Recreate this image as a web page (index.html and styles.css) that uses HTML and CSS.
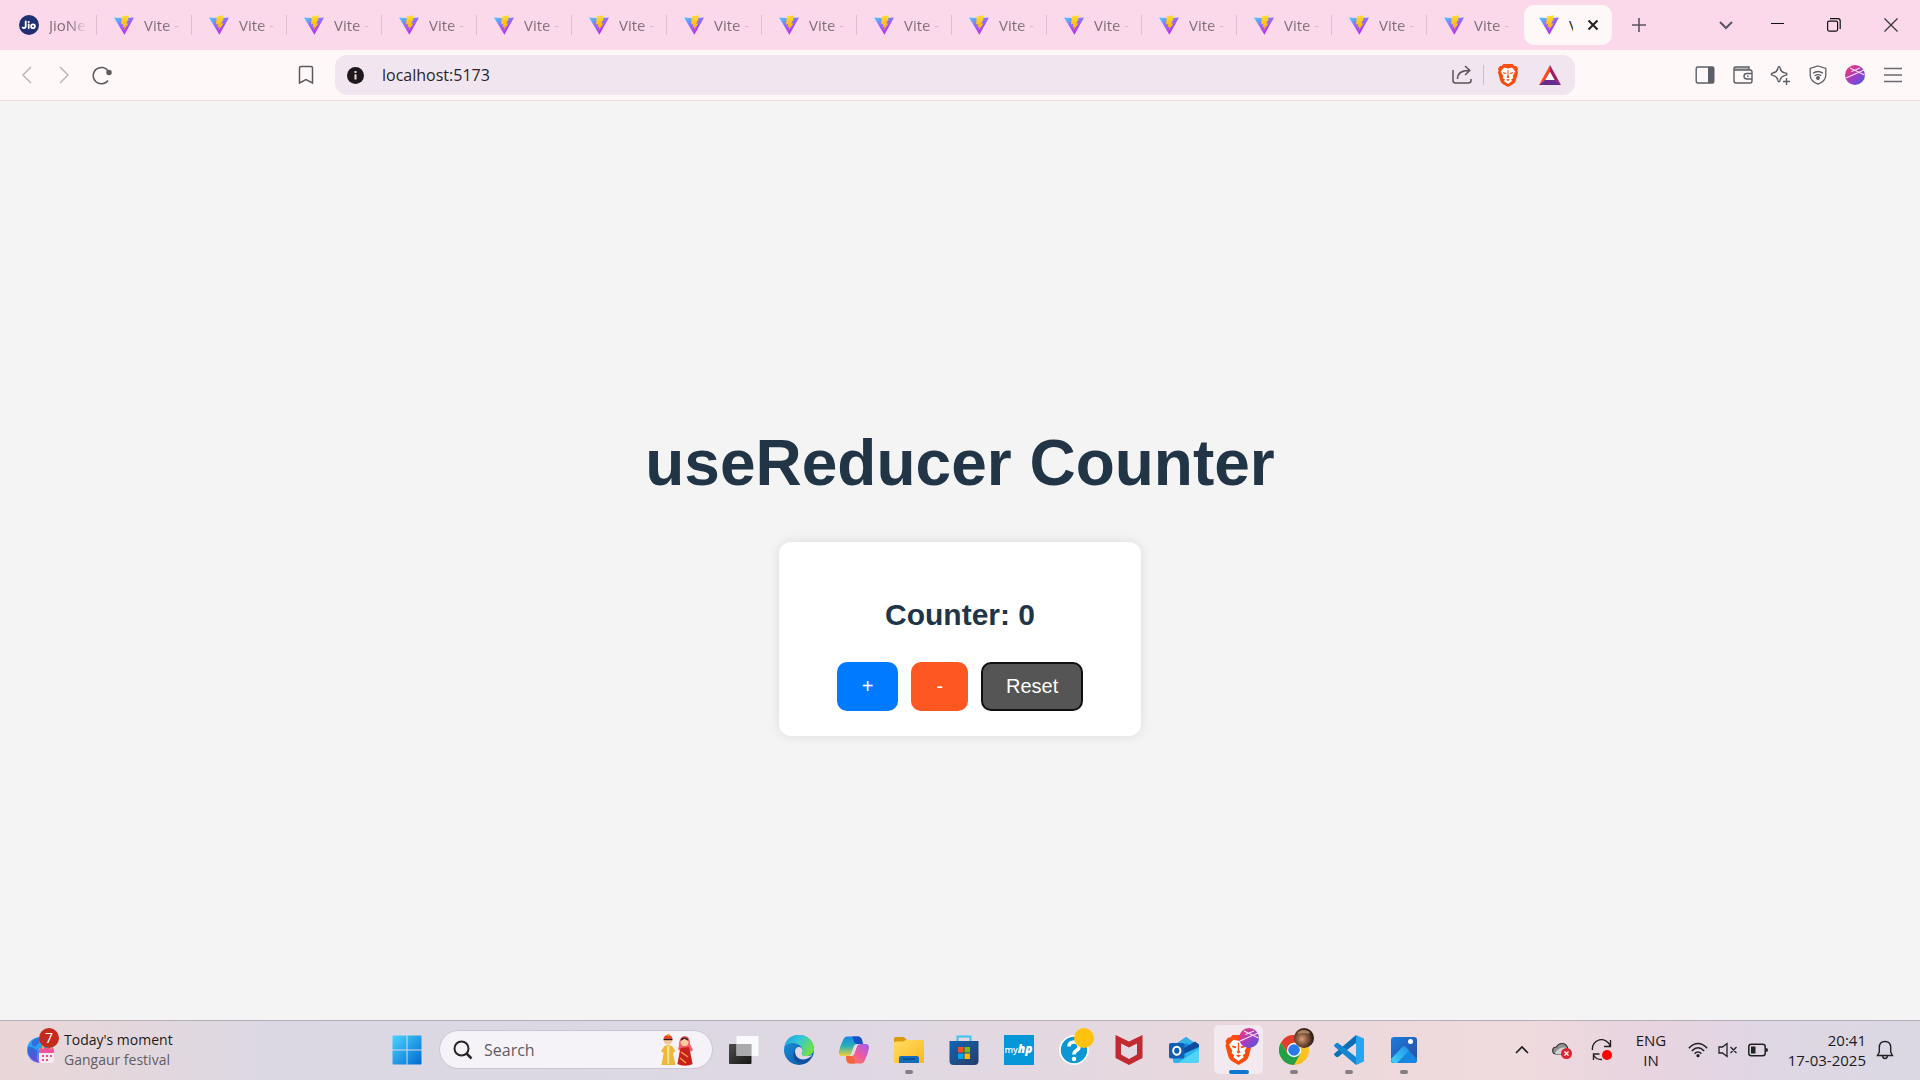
FILE: index.html
```html
<!DOCTYPE html>
<html lang="en">
<head>
<meta charset="utf-8">
<title>Vite + React</title>
<link rel="stylesheet" href="styles.css">
</head>
<body>
<svg class="sprite" aria-hidden="true">
  <defs>
    <linearGradient id="viteBody" x1="0" y1="0" x2=".6" y2="1"><stop offset="0" stop-color="#41d1ff"/><stop offset=".5" stop-color="#9066ff"/><stop offset="1" stop-color="#c125ff"/></linearGradient>
    <linearGradient id="viteBolt" x1="0" y1="0" x2="0" y2="1"><stop offset="0" stop-color="#ffdd35"/><stop offset="1" stop-color="#ffa800"/></linearGradient>
    <linearGradient id="orb" x1="0" y1="0" x2="1" y2="1"><stop offset="0" stop-color="#ff3a63"/><stop offset=".5" stop-color="#a83cc0"/><stop offset="1" stop-color="#3d5be8"/></linearGradient>
    <linearGradient id="win" x1="0" y1="0" x2="1" y2="1"><stop offset="0" stop-color="#4cd4ff"/><stop offset="1" stop-color="#0069cf"/></linearGradient>
    <linearGradient id="edgeTop" x1="0" y1="0" x2="1" y2=".5"><stop offset="0" stop-color="#1a9ee0"/><stop offset=".5" stop-color="#35c6d6"/><stop offset="1" stop-color="#6fe04c"/></linearGradient>
    <linearGradient id="edgeLow" x1="0" y1="0" x2="1" y2="1"><stop offset="0" stop-color="#1d94dc"/><stop offset="1" stop-color="#0a4fa0"/></linearGradient>
    <linearGradient id="coA" x1="0" y1="0" x2="0" y2="1"><stop offset="0" stop-color="#1688e8"/><stop offset=".5" stop-color="#2bb1b4"/><stop offset="1" stop-color="#f2d03a"/></linearGradient>
    <linearGradient id="coB" x1="1" y1="0" x2="0" y2="1"><stop offset="0" stop-color="#a05af0"/><stop offset=".5" stop-color="#ee5c9c"/><stop offset="1" stop-color="#ff8a3c"/></linearGradient>
    <linearGradient id="folder" x1="0" y1="0" x2="1" y2="1"><stop offset="0" stop-color="#ffdc63"/><stop offset="1" stop-color="#fbb91c"/></linearGradient>
    <linearGradient id="store" x1="0" y1="0" x2="1" y2="1"><stop offset="0" stop-color="#0f67b5"/><stop offset="1" stop-color="#283a66"/></linearGradient>
    <linearGradient id="photo" x1="0" y1="0" x2="1" y2="1"><stop offset="0" stop-color="#1a7be0"/><stop offset="1" stop-color="#2b4c9c"/></linearGradient>
    <linearGradient id="hill" x1="0" y1="1" x2="1" y2="0"><stop offset="0" stop-color="#45d2f5"/><stop offset="1" stop-color="#1e93e8"/></linearGradient>
    <linearGradient id="globe" x1="0" y1="0" x2=".4" y2="1"><stop offset="0" stop-color="#1fa9fb"/><stop offset=".6" stop-color="#2f9bf5"/><stop offset="1" stop-color="#8a6cf0"/></linearGradient>
    <linearGradient id="land" x1="0" y1="0" x2="0" y2="1"><stop offset="0" stop-color="#2a6fdc"/><stop offset="1" stop-color="#6a48e0"/></linearGradient>
    <linearGradient id="dark" x1="0" y1="0" x2="1" y2="1"><stop offset="0" stop-color="#4d4d4b"/><stop offset="1" stop-color="#161616"/></linearGradient>
    <radialGradient id="face" cx=".4" cy=".55" r=".6"><stop offset="0" stop-color="#d7a077"/><stop offset=".5" stop-color="#7d5138"/><stop offset="1" stop-color="#21130e"/></radialGradient>
    <symbol id="vite" viewBox="0 0 20 20"><path d="M0 2.400 10 3.200 20 2.400 10.400 19.700Z" fill="url(#viteBody)"/><path d="M15 .2 7.800 1.400 7 9.600 9.300 9.100 8.500 12.400 10.600 11.700 9.500 15.800 14.600 8.300 12.300 8.700 13.600 5.400 15.600 4.900 13.900 4.500Z" fill="url(#viteBolt)"/></symbol>
    <symbol id="lion" viewBox="0 0 20 23"><path d="M5.500 0H14.500L16.300 2 18 1.900 20 4.600 19.400 6.400 20 8.200 17.800 16.500Q17.200 18.700 15.300 19.900L10 23 4.700 19.900Q2.800 18.700 2.200 16.500L0 8.200.6 6.400 0 4.600 2 1.900 3.700 2Z" fill="#fb4c10"/><path d="M10 4.400 14 3.600 17.200 7.400 16 9.800 14.700 12 15.300 14 13.200 15.600 14 17 10 20 6 17 6.800 15.600 4.700 14 5.300 12 4 9.800 2.800 7.400 6 3.600Z" fill="#fff"/><path d="M4.800 8 8.400 8.900 8 10.100 5.500 9.500ZM15.200 8 11.600 8.900 12 10.100 14.500 9.500ZM9.500 6H10.500V11.500L11.400 13.300 10 14.200 8.600 13.300 9.500 11.500ZM8 15.700 10 15 12 15.700 10 17Z" fill="#fb4c10"/></symbol>
    <symbol id="orbIcon" viewBox="0 0 20 20"><circle cx="10" cy="10" r="10" fill="url(#orb)"/><path d="M1 13 19 5M5 3 19.500 10M6.500 6.500 15 3" stroke="#fbdcf2" stroke-width="1.200" fill="none"/></symbol>
  </defs>
</svg>

<header class="browser">
  <div class="tabstrip">
    <nav class="tabs" aria-label="Tabs">
      <button class="tab first"><svg class="fav" viewBox="0 0 20 20"><circle cx="10" cy="10" r="10" fill="#213170"/><g fill="none" stroke="#fff" stroke-width="1.800" stroke-linecap="round"><path d="M6.700 6.500V11.200Q6.700 13 4.900 13L3.700 12.600M9.700 9.500V13"/><circle cx="14" cy="11.200" r="1.900"/></g><circle cx="9.700" cy="7" r="1.100" fill="#fff"/></svg><span>JioNe</span></button>
      <button class="tab"><svg class="fav"><use href="#vite"/></svg><span>Vite -</span></button>
      <button class="tab"><svg class="fav"><use href="#vite"/></svg><span>Vite -</span></button>
      <button class="tab"><svg class="fav"><use href="#vite"/></svg><span>Vite -</span></button>
      <button class="tab"><svg class="fav"><use href="#vite"/></svg><span>Vite -</span></button>
      <button class="tab"><svg class="fav"><use href="#vite"/></svg><span>Vite -</span></button>
      <button class="tab"><svg class="fav"><use href="#vite"/></svg><span>Vite -</span></button>
      <button class="tab"><svg class="fav"><use href="#vite"/></svg><span>Vite -</span></button>
      <button class="tab"><svg class="fav"><use href="#vite"/></svg><span>Vite -</span></button>
      <button class="tab"><svg class="fav"><use href="#vite"/></svg><span>Vite -</span></button>
      <button class="tab"><svg class="fav"><use href="#vite"/></svg><span>Vite -</span></button>
      <button class="tab"><svg class="fav"><use href="#vite"/></svg><span>Vite -</span></button>
      <button class="tab"><svg class="fav"><use href="#vite"/></svg><span>Vite -</span></button>
      <button class="tab"><svg class="fav"><use href="#vite"/></svg><span>Vite -</span></button>
      <button class="tab"><svg class="fav"><use href="#vite"/></svg><span>Vite -</span></button>
      <button class="tab last"><svg class="fav"><use href="#vite"/></svg><span>Vite -</span></button>
      <div class="tab-active"><svg class="fav"><use href="#vite"/></svg><span>V</span><button class="icon-btn" aria-label="Close tab"><svg width="12" height="12" viewBox="0 0 12 12" stroke="#222" stroke-width="2" fill="none"><path d="M1.500 1.500 10.500 10.500M10.500 1.500 1.500 10.500"/></svg></button></div>
      <button class="icon-btn new-tab" aria-label="New tab"><svg width="14" height="14" viewBox="0 0 14 14" stroke="#5c5560" stroke-width="1.600"><path d="M7 0V14M0 7H14"/></svg></button>
    </nav>
    <div class="window-controls">
      <button class="icon-btn" aria-label="Search tabs"><svg width="14" height="14" viewBox="0 0 14 14" fill="none" stroke="#5c5560" stroke-width="2"><path d="M1 4 7 10 13 4"/></svg></button>
      <button class="icon-btn" aria-label="Minimise"><svg width="14" height="14" viewBox="0 0 14 14"><path d="M0 5H13V6H0Z" fill="#111"/></svg></button>
      <button class="icon-btn" aria-label="Restore"><svg width="14" height="14" viewBox="0 0 14 14" fill="none" stroke="#111" stroke-width="1.200"><rect x=".6" y="3.100" width="10" height="10" rx="1.500"/><path d="M3 .7H11Q13.200.700 13.200 3V11"/></svg></button>
      <button class="icon-btn" aria-label="Close"><svg width="14" height="14" viewBox="0 0 14 14" stroke="#333" stroke-width="1.200"><path d="M.5.500 13.500 13.500M13.500.500.500 13.500"/></svg></button>
    </div>
  </div>

  <div class="toolbar">
    <div class="nav-buttons">
      <button class="icon-btn" aria-label="Back"><svg width="18" height="18" viewBox="0 0 18 18" fill="none" stroke="#bcb6ba" stroke-width="1.500"><path d="M13 1 5 9 13 17"/></svg></button>
      <button class="icon-btn" aria-label="Forward"><svg width="18" height="18" viewBox="0 0 18 18" fill="none" stroke="#bcb6ba" stroke-width="1.500"><path d="M5 1 13 9 5 17"/></svg></button>
      <button class="icon-btn" aria-label="Reload"><svg width="20" height="20" viewBox="0 0 20 20" fill="none" stroke="#5c5a60" stroke-width="1.500"><path d="M16.500 6.500A8.200 8.200 0 1 0 16 15.500"/><circle cx="17" cy="7.600" r="2" fill="#5c5a60"/></svg></button>
    </div>
    <button class="icon-btn bookmark" aria-label="Bookmark"><svg width="16" height="20" viewBox="0 0 16 20" fill="none" stroke="#5c5a60" stroke-width="1.500"><path d="M1.500 18V3Q1.500 1.500 3 1.500H13Q14.500 1.500 14.500 3V18L8 14.500Z"/></svg></button>
    <div class="address">
      <svg width="17" height="17" viewBox="0 0 17 17"><circle cx="8.500" cy="8.500" r="8.500" fill="#1c181b"/><path d="M7.500 7.200H9.500V12.500H7.500ZM7.500 4H9.500V6H7.500Z" fill="#e8dde6"/></svg>
      <input type="text" aria-label="Address" value="localhost:5173">
      <button class="icon-btn share" aria-label="Share"><svg width="20" height="20" viewBox="0 0 20 20" fill="none" stroke="#5a5159" stroke-width="1.500"><path d="M1 5V15.500Q1 18 3.500 18H16.500Q19 18 19 15.500V14"/><path d="M5.500 14Q5.500 5.500 17 5.500M13 1 17.800 5.500 13 10"/></svg></button>
      <button class="icon-btn shield" aria-label="Brave Shields"><svg width="20" height="23"><use href="#lion"/></svg></button>
      <button class="icon-btn rewards" aria-label="Brave Rewards"><svg width="22" height="20" viewBox="0 0 22 20"><path d="M11 0V7L6.500 15 0 20Z" fill="#ff4724"/><path d="M11 0 22 20 15.500 15 11 7Z" fill="#9e1f63"/><path d="M0 20 6 15H16L22 20Z" fill="#662d91"/><path d="M11 7 15.500 15H6.500Z" fill="#fff"/></svg></button>
    </div>
    <div class="actions">
      <button class="icon-btn" aria-label="Sidebar"><svg width="20" height="20" viewBox="0 0 20 20"><rect x="1.200" y="2" width="17.600" height="16" rx="1.500" fill="none" stroke="#5c5f66" stroke-width="1.400"/><path d="M13 2H19V18H13Z" fill="#5c5f66"/></svg></button>
      <button class="icon-btn" aria-label="Wallet"><svg width="20" height="20" viewBox="0 0 20 20" fill="none" stroke="#5c5f66" stroke-width="1.400"><path d="M1.500 2.500H16V5H1.500Z" fill="#b9b6ba" stroke="none"/><path d="M1 4V16Q1 18 3 18H17Q19 18 19 16V7Q19 5 17 5H2.500Q1 5 1 3.500T2.500 2H16V5"/><path d="M19 8.500H14Q11 8.500 11 11.200T14 14H19M14 11.200H15.500"/></svg></button>
      <button class="icon-btn" aria-label="Leo AI"><svg width="20" height="20" viewBox="0 0 20 20" fill="none" stroke="#5c5f66" stroke-width="1.400"><path d="M9 1.500Q9.800 1.500 10.200 3.500 11 7 14.500 7.800 17 8.300 17 9.200T14.500 10.600Q11 11.500 10.200 14.800 9.800 16.900 9 16.900T7.800 14.800Q7 11.500 3.500 10.600 1.200 10 1.200 9.200T3.500 7.800Q7 7 7.800 3.500 8.200 1.500 9 1.500ZM16.500 13V20M13 16.500H20"/></svg></button>
      <button class="icon-btn" aria-label="VPN"><svg width="20" height="20" viewBox="0 0 20 20" fill="none" stroke="#5c5f66" stroke-width="1.300"><path d="M10 1 17.800 3.500V10Q17.800 16 10 19.200 2.200 16 2.200 10V3.500Z"/><path d="M5 8.200Q10 4.800 15 8.200M6.700 10.800Q10 8.600 13.300 10.800"/><circle cx="10" cy="13" r="1.300" fill="#5c5f66"/></svg></button>
      <button class="icon-btn" aria-label="Profile"><svg width="20" height="20"><use href="#orbIcon"/></svg></button>
      <button class="icon-btn" aria-label="Menu"><svg width="20" height="16" viewBox="0 0 20 16" stroke="#6c6a70" stroke-width="1.500"><path d="M1 1.500H19M1 8H19M1 14.500H19"/></svg></button>
    </div>
  </div>
</header>

<main class="page">
  <h1>useReducer Counter</h1>
  <section class="card">
    <h2>Counter: 0</h2>
    <div class="buttons">
      <button class="btn increment">+</button>
      <button class="btn decrement">-</button>
      <button class="btn reset">Reset</button>
    </div>
  </section>
</main>

<footer class="taskbar">
  <button class="widget">
    <span class="widget-icon">
      <svg width="28" height="28" viewBox="0 0 28 28"><circle cx="13" cy="14" r="13" fill="url(#globe)"/><path d="M1 11Q5 10 8 13 12 15 10 19 9 22 11 26 3 24 1 17Z" fill="url(#land)"/><path d="M5 5Q8 2 13 2L12 7 8 11 5 9Z" fill="#2e6fdc"/><rect x="12" y="12" width="15" height="15" rx="2" fill="#f7e9f2"/><path d="M12 17V14Q12 12 14 12H25Q27 12 27 14V17Z" fill="#f0539c"/><g fill="#ea4b93"><path d="M15 19H17V21H15ZM19 19H21V21H19ZM23 19H25V21H23ZM15 23H17V25H15ZM19 23H21V25H19Z"/></g><path d="M15 9H17V13H15ZM23 9H25V13H23Z" fill="#f5a623"/></svg>
      <span class="badge">7</span>
    </span>
    <span class="widget-text"><span>Today's moment</span><span class="muted">Gangaur festival</span></span>
  </button>

  <div class="launcher">
    <button class="icon-btn start" aria-label="Start"><svg width="30" height="30" viewBox="0 0 30 30"><path d="M.5 1.500Q.5.500 1.500.500H14.500V14.500H.5ZM15.500.500H28.500Q29.500.500 29.500 1.500V14.500H15.500ZM.5 15.500H14.500V29.500H1.500Q.5 29.500.5 28.500ZM15.500 15.500H29.500V28.500Q29.500 29.500 28.500 29.500H15.500Z" fill="url(#win)"/></svg></button>
    <label class="search">
      <svg width="20" height="20" viewBox="0 0 20 20" fill="none" stroke="#262626" stroke-width="2"><circle cx="8.500" cy="8.500" r="7"/><path d="M13.500 13.500 18.500 18.500" stroke-width="2.500"/></svg>
      <input type="text" placeholder="Search" aria-label="Search">
      <svg width="34" height="32" viewBox="0 0 34 32"><path d="M4.500 12 8 11 12 12 15.500 17 13 19 12.500 17 15.500 31H1.500L4 17 3.500 19 1 17Z" fill="#e9b83d"/><path d="M7 12H9.500L9 30H7.500Z" fill="#fbe08a"/><circle cx="8" cy="6.500" r="4.300" fill="#f6c99c"/><path d="M3.500 5Q4 1 8 1T12.500 5Z" fill="#e5432c"/><path d="M3.500 5H12.500V6.200H3.500Z" fill="#2a1a14"/><path d="M7 0H10L8.500 3Z" fill="#f7a51d"/><path d="M19 12Q19 2 24.500 2T30 10L33 16 30 18 32.500 30Q25 33 17.500 30L20 17 18 15Z" fill="#f0606a"/><path d="M20.500 14 29 13 32.500 30Q25 33 17.500 30Z" fill="#c9201d"/><circle cx="24.500" cy="8" r="4" fill="#f8cba2"/><path d="M20.500 7Q21 3 24.500 3.500 28 3 28.500 7L24.500 4.800Z" fill="#3b1b16"/><path d="M21 18 28 23M20 24 26 29" stroke="#f3a437" stroke-width="1.500"/></svg>
    </label>
    <div class="apps">
      <button class="app" aria-label="Task view"><svg width="30" height="30" viewBox="0 0 30 30"><rect x="0" y="9" width="22.500" height="20" rx="1" fill="url(#dark)"/><rect x="7.500" y="1" width="22" height="20" rx="1" fill="#fff" fill-opacity=".85"/><path d="M7.500 9H22.500V21H7.500Z" fill="#aaa9ab"/></svg></button>
      <button class="app" aria-label="Edge"><svg width="30" height="30" viewBox="0 0 30 30"><circle cx="15" cy="15" r="15" fill="url(#edgeLow)"/><path d="M.4 12Q2.500 0 15 0C24 0 30 6 30 13.500 30 19 26 21 22 21 18.500 21 17 19.500 18 18 19.500 15.500 18.500 12 14.500 9.500 9 6.500 3 8 .4 12Z" fill="url(#edgeTop)"/><path d="M11 17C11 13.500 13 12 15 12 18 12 19.500 15.500 18 18 17 19.500 18.500 21 22 21Q25.500 21 28 20 28 21.500 26 24 20 26 15.500 24 11 21.500 11 17Z" fill="#ddd8e3"/><path d="M11 17Q11 22 16 24 22 26 28 20.500 26.500 25 22 28 15 30 10.500 25 8 20 11 14Z" fill="#10509c"/></svg></button>
      <button class="app" aria-label="Copilot"><svg width="30" height="30" viewBox="0 0 30 30"><path d="M8 1.500H19Q22 1.500 23 5L24 9H18Q15.500 9 14.500 12L12 19Q11 21 8 21H3Q0 21-.1 17 1 11 4 5 5.500 1.500 8 1.500Z" fill="url(#coA)"/><path d="M22 28.500H11Q8 28.500 7.500 25L7 21H12Q14.500 21 15.500 18L18 11Q19 9 22 9H27Q30 9 30 13 29 19 26 25 24.500 28.500 22 28.500Z" fill="url(#coB)"/><path d="M13 1.500H19Q22 1.500 23 5L24 9H18Q15 9 14 3Z" fill="#1750c8"/><path d="M7 21H13Q15 21 16 28.500H11Q8 28.500 7.500 25Z" fill="#f4653a"/><path d="M15.500 11.500Q16.500 9.500 18.500 9.500L15 19.500Q14 21 12 21Z" fill="#e6dce6"/></svg></button>
      <button class="app running" aria-label="File Explorer"><svg width="30" height="30" viewBox="0 0 30 30"><path d="M0 4Q0 2 2 2H10L13 5V12H0Z" fill="#d99a0c"/><path d="M0 8Q0 6.500 2 6.500H9L12 5H28Q30 5 30 7V28H0Z" fill="url(#folder)"/><path d="M5 28V23Q5 21 7 21H23Q25 21 25 23V28Z" fill="#0f6cbf"/><path d="M9 24H21" stroke="#0a3f7c" stroke-width="1.200"/></svg></button>
      <button class="app" aria-label="Microsoft Store"><svg width="30" height="30" viewBox="0 0 30 30"><path d="M8.500 7V1.500H21.500V7" fill="none" stroke="#3cc3f2" stroke-width="2"/><path d="M.5 6H29.500V26Q29.500 30 25.500 30H4.500Q.5 30 .5 26Z" fill="url(#store)"/><path d="M9 12H14.500V17.500H9Z" fill="#f25022"/><path d="M15.500 12H21V17.500H15.500Z" fill="#7fba00"/><path d="M9 18.500H14.500V24H9Z" fill="#00a4ef"/><path d="M15.500 18.500H21V24H15.500Z" fill="#ffb900"/></svg></button>
      <button class="app" aria-label="myHP"><span class="myhp">my<b>hp</b></span></button>
      <button class="app" aria-label="HP Support"><svg width="30" height="30" viewBox="0 0 30 30"><circle cx="15" cy="15" r="14" fill="#0b96d6" stroke="#fff" stroke-width="1.600"/><path d="M10 11.500Q10 7 15 7T20 11.500Q20 14 17.500 15.500 15 17 15 19.500" fill="none" stroke="#fff" stroke-width="3.600"/><circle cx="15" cy="24" r="2.200" fill="#fff"/></svg><span class="overlay dot"></span></button>
      <button class="app" aria-label="McAfee"><svg width="30" height="30" viewBox="0 0 30 30"><path d="M1.500 0 15 6.500 28.500 0V23L15 30 1.500 23Z" fill="#c02a30"/><path d="M7 8.500 15 12.500 23 8.500V19.500L15 24 7 19.500Z" fill="#e2d9e3"/></svg></button>
      <button class="app" aria-label="Outlook"><svg width="30" height="30" viewBox="0 0 30 30"><path d="M4 11 17 2 30 11V17H4Z" fill="#1689dd"/><path d="M7 9 17 2 30 11 26 13 17 8 8 13Z" fill="#35b1ea"/><path d="M10 16 26 6.500 30 9.500V13L15 21Z" fill="#0b4ba0"/><path d="M4 26V18L12 20 30 12V25Q30 28 27 28H8Q4 28 4 26Z" fill="#28b2ee"/><path d="M9 28 30 14V25Q30 28 27 28Z" fill="#51d3f7"/><rect y="8" width="15.500" height="15.500" rx="2" fill="#0f5eb4"/><ellipse cx="7.800" cy="15.700" rx="3.600" ry="4" fill="none" stroke="#fff" stroke-width="2"/></svg></button>
      <button class="app current" aria-label="Brave"><svg width="27" height="30"><use href="#lion"/></svg><svg class="overlay" viewBox="0 0 20 20"><use href="#orbIcon"/></svg></button>
      <button class="app running" aria-label="Chrome"><svg width="30" height="30" viewBox="0 0 30 30"><circle cx="15" cy="15" r="15" fill="#fcc31e"/><path d="M2 7.500A15 15 0 0 1 28 7.500H15L9 19Z" fill="#e33b2e"/><path d="M2 7.500A15 15 0 0 0 15 30L21.500 18.500H8.500Z" fill="#24a148"/><circle cx="15" cy="15" r="7.200" fill="#fff"/><circle cx="15" cy="15" r="5.800" fill="#2a7bea"/></svg><svg class="overlay" viewBox="0 0 20 20"><circle cx="10" cy="10" r="10" fill="url(#face)"/><path d="M4 4Q10 0 16 4L15 6Q9 4 4 6Z" fill="#ecc29c" fill-opacity=".5"/></svg></button>
      <button class="app running" aria-label="Visual Studio Code"><svg width="30" height="30" viewBox="0 0 30 30"><path d="M22 0 22 8 4 22Q3 22.500 2 21.700L.5 20.300Q-.3 19.300.7 18.300Z" fill="#0a6fb8"/><path d="M22 30V22L4 8Q3 7.500 2 8.300L.5 9.700Q-.3 10.700.7 11.700Z" fill="#1486d0"/><path d="M22 0 30 3.500V26.500L22 30Z" fill="#2ba4f0"/></svg></button>
      <button class="app running" aria-label="Photos"><svg width="30" height="30" viewBox="0 0 30 30"><rect x="2" y="2" width="26" height="26" rx="3" fill="url(#photo)"/><path d="M2 24 13.500 12Q15 10.500 16.500 12L28 24V25Q28 28 25 28H5Q2 28 2 25Z" fill="#1786e0"/><path d="M3 27 2 24 13.500 12Q15 10.500 16.500 12L20 15.500 8 28H5Z" fill="url(#hill)"/><circle cx="21.500" cy="6.500" r="2.500" fill="#fff"/></svg></button>
    </div>
  </div>

  <div class="tray">
    <button class="icon-btn" aria-label="Show hidden icons"><svg width="14" height="10" viewBox="0 0 14 10" fill="none" stroke="#1c1c1c" stroke-width="1.600"><path d="M1 8 7 2 13 8"/></svg></button>
    <button class="icon-btn" aria-label="OneDrive"><svg width="20" height="20" viewBox="0 0 20 20"><path d="M4 14Q.7 14 .7 10.500T4.500 7Q6 3.500 10 3.500 14 3.500 15.500 7.500L16 14Z" fill="#8f9291" stroke="#333" stroke-width="1.200"/><path d="M3 13Q8 6 15 8V14H4Z" fill="#d3d2d2"/><circle cx="14.500" cy="13.500" r="5.500" fill="#dc2430"/><path d="M12.500 11.500 16.500 15.500M16.500 11.500 12.500 15.500" stroke="#fff" stroke-width="1.400"/></svg></button>
    <button class="icon-btn" aria-label="Update"><svg width="22" height="22" viewBox="0 0 22 22" fill="none" stroke="#222" stroke-width="1.400"><path d="M1.500 11A9 9 0 0 1 19 7M19.500 1V7.500H13M2.500 21V15H8.500M2.500 16A9 9 0 0 0 11 20.500"/><circle cx="16" cy="16" r="5" fill="#fb0404" stroke="none"/></svg></button>
    <button class="lang"><span>ENG</span><span>IN</span></button>
    <button class="status" aria-label="Network, volume and battery">
      <svg width="20" height="16" viewBox="0 0 20 16" fill="none" stroke="#222" stroke-width="1.500"><path d="M.8 6.200Q10-3.200 19.200 6.200M3.800 9Q10 2.600 16.200 9M6.600 11.600Q10 8.200 13.400 11.600"/><circle cx="10" cy="13.700" r="1.600" fill="#222" stroke="none"/></svg>
      <svg width="20" height="16" viewBox="0 0 20 16" fill="none" stroke="#222" stroke-width="1.300"><path d="M1 5H4.500L9 1.500V14.500L4.500 11H1ZM12.500 5 18.500 11M18.500 5 12.500 11"/></svg>
      <svg width="20" height="14" viewBox="0 0 20 14"><rect x=".8" y="1.300" width="16.400" height="11.400" rx="2.500" fill="none" stroke="#222" stroke-width="1.500"/><path d="M3 3.500H7.500V10.500H3ZM18 5Q20 5 20 7T18 9Z" fill="#222"/></svg>
    </button>
    <button class="clock"><span>20:41</span><span>17-03-2025</span></button>
    <button class="icon-btn bell" aria-label="Notifications"><svg width="18" height="20" viewBox="0 0 18 20" fill="none" stroke="#222" stroke-width="1.400"><path d="M1.500 15.500 3.300 12V7.500Q3.300 1.500 9 1.500T14.700 7.500V12L16.500 15.500ZM6.500 16Q7 18.500 9 18.500T11.500 16"/></svg></button>
  </div>
</footer>
</body>
</html>
```
FILE: styles.css
```css
* {
  box-sizing: border-box;
}

body {
  margin: 0;
  min-height: 100vh;
  display: flex;
  flex-direction: column;
  background: #f4f4f4;
  color: #213547;
  font-family: "Open Sans", "Noto Sans", sans-serif;
  font-size: 15px;
}

button,
input {
  margin: 0;
  padding: 0;
  border: 0;
  background: none;
  color: inherit;
  font: inherit;
}

svg {
  display: block;
  flex: none;
}

.sprite {
  position: absolute;
  width: 0;
  height: 0;
}

.icon-btn {
  display: flex;
  align-items: center;
  justify-content: center;
  flex: none;
}

/* Tab strip */
.tabstrip {
  display: flex;
  justify-content: space-between;
  height: 50px;
  background: #fbd9ea;
}

.tabs {
  display: flex;
  align-items: center;
}

.tab {
  display: flex;
  align-items: center;
  gap: 10px;
  width: 95px;
  height: 20px;
  padding-left: 17px;
  border-right: 1px solid #dcc0ce;
  color: #7f6f79;
}

.tab.first {
  width: 97px;
  padding-left: 19px;
}

.tab.last {
  border-color: transparent;
}

.fav {
  width: 20px;
  height: 20px;
}

.tab span {
  width: 36px;
  overflow: hidden;
  text-align: left;
  white-space: nowrap;
  line-height: 18px;
  mask-image: linear-gradient(to right, #000 22px, transparent 37px);
}

.tab-active {
  display: flex;
  align-items: center;
  width: 88px;
  height: 40px;
  margin-left: 2px;
  padding-left: 15px;
  border-radius: 10px;
  background: #fff8f8;
  color: #222;
}

.tab-active span {
  width: 4px;
  margin: 0 14px 0 10px;
  overflow: hidden;
  line-height: 18px;
}

.new-tab {
  width: 54px;
}

.window-controls {
  display: grid;
  grid-template-columns: 48px 56px 56px 58px;
}

/* Toolbar */
.toolbar {
  display: flex;
  align-items: center;
  height: 51px;
  border-bottom: 1px solid #f5dbe0;
  background: #fff8f8;
}

.nav-buttons {
  display: flex;
  flex: none;
  gap: 19px;
  width: 298px;
  padding-left: 18px;
}

.bookmark {
  margin-right: 21px;
}

.address {
  display: flex;
  align-items: center;
  flex: none;
  width: 1240px;
  max-width: 65%;
  height: 40px;
  padding: 0 14px 0 12px;
  border-radius: 12px;
  background: #f1e5ef;
}

.address input {
  flex: 1;
  min-width: 0;
  margin-left: 18px;
  color: #29222a;
  font-size: 16px;
}

.share {
  width: 32px;
  height: 20px;
  padding-right: 12px;
  border-right: 1px solid #c9bfc9;
}

.shield {
  margin-left: 14px;
}

.rewards {
  margin-left: 21px;
}

.actions {
  display: flex;
  align-items: center;
  justify-content: space-between;
  width: 208px;
  margin-left: auto;
  margin-right: 17px;
}

/* Counter page */
.page {
  display: flex;
  flex: 1;
  flex-direction: column;
  align-items: center;
  justify-content: center;
  padding-bottom: 2px;
  font-family: "Liberation Sans", Arial, sans-serif;
}

h1 {
  margin: 44px 0;
  font-size: 64px;
  line-height: 70px;
}

.card {
  min-width: 362px;
  padding: 25px;
  border-radius: 12px;
  background: #fff;
  box-shadow: 0 0 12px rgba(0, 0, 0, 0.1);
}

h2 {
  margin: 25px 0;
  font-size: 30px;
  line-height: 45px;
  text-align: center;
}

.buttons {
  display: flex;
  justify-content: center;
  gap: 13px;
}

.btn {
  padding: 11px 23px;
  border: 2px solid transparent;
  border-radius: 10px;
  color: #fff;
  font-size: 20px;
  line-height: 23px;
}

.increment {
  border-color: #007bff;
  background: #007bff;
}

.decrement {
  border-color: #ff5722;
  background: #ff5722;
}

.reset {
  border-color: #101010;
  background: #555;
}

/* Taskbar */
.taskbar {
  display: flex;
  align-items: center;
  height: 60px;
  padding-bottom: 2px;
  border-top: 1px solid #b5afb8;
  background: linear-gradient(to right, #ead7d8 0, #dcd8e3 14%, #dbd8e4 30%, #e1d8e2 50%, #edd9dc 72%, #efdadd 79%, #e8d4e0 86%, #dfd7e4 92%, #dbd8e2 100%);
  color: #1b1a1c;
  font-size: 14px;
  line-height: 20px;
}

.widget {
  display: flex;
  align-items: center;
  gap: 9px;
  width: 379px;
  padding-left: 27px;
  text-align: left;
}

.widget-icon {
  position: relative;
}

.badge {
  position: absolute;
  top: -8px;
  right: -4px;
  width: 20px;
  height: 20px;
  border-radius: 50%;
  background: #c42b1c;
  color: #fff;
  text-align: center;
}

.widget-text,
.lang,
.clock {
  display: flex;
  flex-direction: column;
}

.muted {
  color: #615d63;
}

.launcher {
  display: flex;
  align-items: center;
}

.start {
  width: 55px;
}

.search {
  display: flex;
  align-items: center;
  width: 274px;
  height: 39px;
  margin-left: 5px;
  margin-right: 3px;
  padding: 0 18px 0 13px;
  border: 1px solid #c9c6d1;
  border-radius: 20px;
  background: #f5f3f8;
}

.search input {
  flex: 1;
  min-width: 0;
  margin-left: 11px;
  font-size: 16px;
}

.search input::placeholder {
  color: #5f5c62;
  opacity: 1;
}

.apps {
  display: flex;
}

.app {
  position: relative;
  display: flex;
  align-items: center;
  justify-content: center;
  width: 49px;
  height: 49px;
  margin: 0 3px;
  border-radius: 5px;
}

.app.current {
  background: #f3eaf0;
}

.running::after,
.current::after {
  content: "";
  position: absolute;
  bottom: 0;
  width: 8px;
  height: 4px;
  border-radius: 2px;
  background: #857f83;
}

.current::after {
  width: 20px;
  background: #0a78d4;
}

.overlay {
  position: absolute;
  top: 3px;
  right: 4px;
  width: 20px;
  height: 20px;
}

.dot {
  border-radius: 50%;
  background: #ffc20e;
}

.myhp {
  width: 30px;
  height: 30px;
  background: #0496d7;
  color: #fff;
  font-size: 9px;
  font-weight: 600;
  line-height: 28px;
}

.myhp b {
  font-size: 12px;
  font-style: italic;
}

.tray {
  display: flex;
  align-items: center;
  margin-left: auto;
  padding-right: 26px;
  font-size: 15px;
}

.tray > .icon-btn {
  width: 40px;
}

.tray > .bell {
  width: 18px;
}

.lang {
  width: 58px;
  align-items: center;
}

.status {
  display: flex;
  align-items: center;
  gap: 10px;
  margin-left: 8px;
}

.clock {
  width: 98px;
  margin-right: 10px;
  align-items: flex-end;
}
```
